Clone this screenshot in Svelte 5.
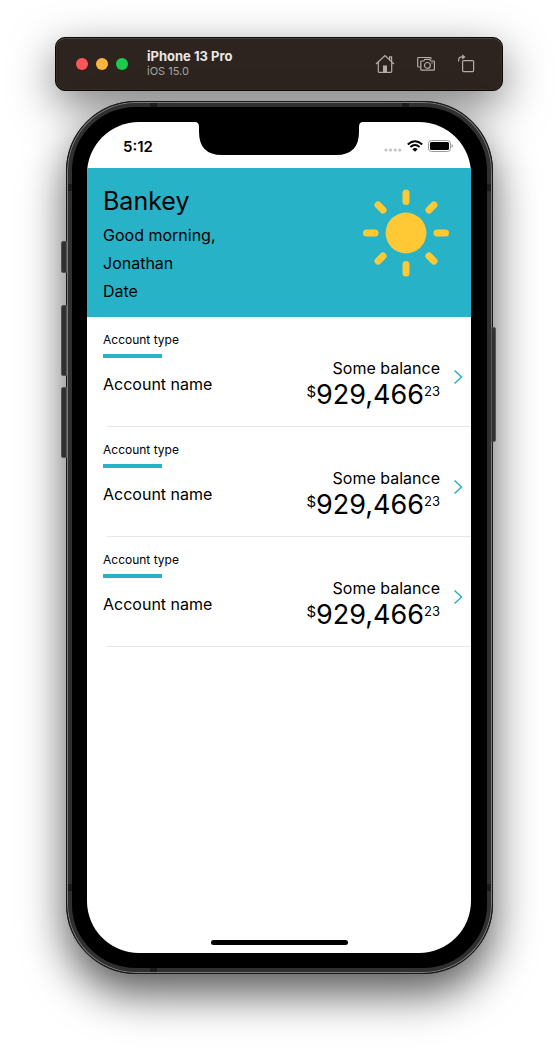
<script>
  const accounts = [1, 2, 3].map((id) => ({
    id,
    type: 'Account type',
    name: 'Account name',
    label: 'Some balance',
    dollars: '929,466',
    cents: '23'
  }));
  const diagonals = [45, 135, 225, 315];
  const bands = ['top-left', 'top-right', 'left-top', 'right-top', 'left-bottom', 'right-bottom', 'bottom-left'];
</script>

<main>
  <header class="toolbar">
    <div class="lights">
      <button class="red" aria-label="Close"></button>
      <button class="amber" aria-label="Minimize"></button>
      <button class="green" aria-label="Zoom"></button>
    </div>
    <div class="device">
      <strong>iPhone 13 Pro</strong>
      <span>iOS 15.0</span>
    </div>
    <div class="tools">
      <button aria-label="Home">
        <svg width="20" height="20" viewBox="0 0 20 20">
          <path d="M1 10 10 1.600l9 8.400M3.300 8.300v9.200q0 .8.8.8h11.800q.8 0 .8-.8V8.300M14.600 5.800V2.800h2v5" />
          <path class="solid" d="M8 11.500h4v7H8z" />
        </svg>
      </button>
      <button aria-label="Screenshot">
        <svg width="20" height="20" viewBox="0 0 20 20">
          <path d="M4.5 13h-2q-.8 0-.8-.8V4.300q0-.8.8-.8h11.700q.8 0 .8.8v1" />
          <path d="M5.600 7h2.100l1.200-1.700h4.700L14.800 7h2.800q.8 0 .8.8v7.600q0 .8-.8.8h-12q-.8 0-.8-.8V7.800q0-.8.8-.8z" />
          <circle cx="11.400" cy="11.400" r="2.900" />
          <circle class="solid" cx="16" cy="9" r=".7" />
        </svg>
      </button>
      <button aria-label="Rotate">
        <svg width="20" height="20" viewBox="0 0 20 20">
          <rect x="5.600" y="6.600" width="11" height="11" rx="1" />
          <path d="M1.600 7.500V6.500Q1.600 2.900 5 2.900h2" />
          <path class="solid" d="M5.200.2 8.500 2.900 5.200 5.500z" />
        </svg>
      </button>
    </div>
  </header>

  <section class="phone">
    {#each bands as band}
      <i class="band {band}"></i>
    {/each}
    <i class="key mute"></i>
    <i class="key up"></i>
    <i class="key down"></i>
    <i class="key power"></i>
    <div class="screen">
      <svg class="notch" width="168" height="33" viewBox="0 0 168 33">
        <path d="M0 0h168q-4 0-4 5v5q0 23-23 23H27Q4 33 4 10V5q0-5-4-5z" />
      </svg>
      <div class="status">
        <time>5:12</time>
        <div class="signals">
          <svg width="18" height="12" viewBox="0 0 18 12" fill="#c4c4c6">
            <circle cx="2" cy="10" r="1.6" /><circle cx="6.6" cy="10" r="1.6" />
            <circle cx="11.2" cy="10" r="1.6" /><circle cx="15.8" cy="10" r="1.6" />
          </svg>
          <svg width="16" height="12" viewBox="0 0 16 12">
            <path d="M.8 4.400q7.200-6.300 14.400 0M3.400 7q4.600-4 9.200 0" fill="none" stroke="#000" stroke-width="2" />
            <path d="M8 11.800 5.300 9.200q2.700-2.200 5.400 0z" />
          </svg>
          <svg width="25" height="12" viewBox="0 0 25 12">
            <rect x=".5" y=".5" width="22" height="11" rx="3" fill="none" stroke="#999" />
            <rect x="2" y="2" width="19" height="8" rx="1.5" />
            <path d="M23.600 4q1.400.5 1.400 2t-1.400 2z" fill="#999" />
          </svg>
        </div>
      </div>

      <div class="hero">
        <div>
          <h1>Bankey</h1>
          <p>Good morning,</p>
          <p>Jonathan</p>
          <p>Date</p>
        </div>
        <svg width="88" height="88" viewBox="-44 -44 88 88" fill="#ffc935">
          <circle r="20.400" />
          <path d="M0-40v8.500M0 40v-8.500M-39.500 0h8.500M39.500 0H31" />
          {#each diagonals as angle}
            <path d="M32.500 0h7" transform="rotate({angle})" />
          {/each}
        </svg>
      </div>

      <ul>
        {#each accounts as account (account.id)}
          <li>
            <a href="#account-{account.id}">
              <div class="info">
                <span class="type">{account.type}</span>
                <span class="name">{account.name}</span>
              </div>
              <div class="balance">
                <span class="label">{account.label}</span>
                <span class="amount"><small class="sign">$</small>{account.dollars}<small>{account.cents}</small></span>
              </div>
              <svg width="10" height="16" viewBox="0 0 10 16">
                <path d="m1.500 1.500 7 6.500-7 6.500" />
              </svg>
            </a>
          </li>
        {/each}
      </ul>
      <div class="home-bar"></div>
    </div>
  </section>
</main>

<style>
  :global(body) {
    margin: 0;
    background: #fff;
  }
  * {
    box-sizing: border-box;
  }
  main {
    padding: 37px 55px 75px;
    overflow: hidden;
    font-family: Inter, "Liberation Sans", sans-serif;
    color: #000;
  }
  button {
    padding: 0;
    border: 0;
    background: none;
  }
  svg {
    display: block;
  }
  .toolbar {
    display: flex;
    align-items: center;
    height: 54px;
    padding: 0 25px 0 20px;
    border: 1px solid #0b0807;
    border-radius: 10px;
    background: #2d2420;
    box-shadow: inset 0 1px 0 #4b433f, inset 0 0 0 1px #352c28, 0 14px 44px rgba(0, 0, 0, 0.5);
  }
  .lights {
    display: flex;
    gap: 8px;
  }
  .lights button {
    width: 12px;
    height: 12px;
    border-radius: 50%;
  }
  .red {
    background: #ff5558;
  }
  .amber {
    background: #ffb43e;
  }
  .green {
    background: #1bcb4b;
  }
  .device {
    display: flex;
    flex-direction: column;
    flex: 1;
    margin-left: 19px;
    font-size: 11px;
    line-height: 15px;
    color: #aaa4a1;
  }
  .device strong {
    font-size: 13px;
    font-weight: 700;
    color: #ebe7e5;
  }
  .tools {
    display: flex;
    gap: 21px;
  }
  .tools svg {
    fill: none;
    stroke: #b4aca8;
    stroke-width: 1.2;
  }
  .tools .solid {
    fill: #b4aca8;
    stroke: none;
  }
  .phone {
    position: relative;
    margin: 10px 10px 0 11px;
    padding: 15px 16px 15px 15px;
    border: 6px solid #303030;
    border-radius: 70px;
    background: #000;
    box-shadow: 0 20px 44px rgba(0, 0, 0, 0.65);
  }
  .phone::before {
    content: "";
    position: absolute;
    inset: -6px;
    border: 1px solid #171717;
    border-radius: 70px;
    box-shadow: inset 0 0 0 1px #7c7c7c;
  }
  .band {
    position: absolute;
    width: 4px;
    height: 7px;
    background: #1c1c1c;
  }
  .top-left,
  .top-right,
  .bottom-left {
    width: 7px;
    height: 4px;
  }
  .top-left,
  .top-right {
    top: -4px;
  }
  .top-left,
  .bottom-left {
    left: 78px;
  }
  .top-right {
    right: 78px;
  }
  .bottom-left {
    bottom: -4px;
  }
  .left-top,
  .left-bottom {
    left: -4px;
  }
  .right-top,
  .right-bottom {
    right: -4px;
  }
  .left-top,
  .right-top {
    top: 77px;
  }
  .left-bottom,
  .right-bottom {
    bottom: 77px;
  }
  .key {
    position: absolute;
    left: -11px;
    width: 6px;
    border: 1px solid #555;
    border-radius: 2px 0 0 2px;
    background: #303030;
  }
  .mute {
    top: 134px;
    height: 32px;
  }
  .up {
    top: 198px;
    height: 71px;
  }
  .down {
    top: 280px;
    height: 71px;
  }
  .power {
    top: 220px;
    right: -9px;
    left: auto;
    width: 5px;
    height: 115px;
    border-radius: 0 2px 2px 0;
  }
  .screen {
    position: relative;
    display: flex;
    flex-direction: column;
    aspect-ratio: 384 / 831;
    border-radius: 52px;
    background: #fff;
    overflow: hidden;
  }
  .notch {
    position: absolute;
    top: 0;
    left: 50%;
    transform: translateX(-50%);
  }
  .status {
    display: flex;
    justify-content: space-between;
    align-items: center;
    height: 46px;
    padding: 2px 18px 0 36px;
  }
  .status time {
    font-size: 15px;
    font-weight: 600;
  }
  .signals {
    display: flex;
    gap: 5px;
  }
  .hero {
    display: flex;
    justify-content: space-between;
    align-items: flex-start;
    height: 149px;
    padding: 17px 21px 0 16px;
    background: #28b2c7;
  }
  .hero svg {
    margin-top: 4px;
    stroke: #ffc935;
    stroke-width: 7;
    stroke-linecap: round;
  }
  .hero circle {
    stroke: none;
  }
  h1 {
    margin: 0 0 4px;
    font-size: 25px;
    font-weight: 400;
    line-height: 32px;
  }
  p {
    margin: 0;
    font-size: 16px;
    line-height: 28px;
  }
  ul {
    margin: 0;
    padding: 0;
    list-style: none;
  }
  li {
    position: relative;
  }
  li::after {
    content: "";
    position: absolute;
    right: 0;
    bottom: 0;
    left: 20px;
    height: 1px;
    background: #e8e8e9;
  }
  a {
    display: flex;
    align-items: flex-start;
    height: 110px;
    padding: 15px 8px 0 16px;
    color: inherit;
    text-decoration: none;
  }
  .info,
  .balance {
    display: flex;
    flex-direction: column;
  }
  .info {
    flex: 1;
    align-items: flex-start;
  }
  .type {
    font-size: 12px;
    line-height: 16px;
  }
  .type::after {
    content: "";
    display: block;
    width: 59px;
    height: 4px;
    margin-top: 6px;
    background: #28b2c7;
  }
  .name {
    margin-top: 16px;
    font-size: 16px;
    line-height: 20px;
  }
  .balance {
    align-items: flex-end;
    margin: 26px 13px 0 0;
  }
  .label {
    font-size: 16px;
    line-height: 20px;
  }
  .amount {
    display: flex;
    font-size: 27px;
    line-height: 34px;
  }
  .amount small {
    font-size: 13px;
    line-height: 27px;
  }
  .amount .sign {
    font-size: 15px;
  }
  a svg {
    margin-top: 37px;
    fill: none;
    stroke: #28b2c7;
    stroke-width: 1.5;
  }
  .home-bar {
    width: 137px;
    height: 5px;
    margin: auto auto 8px;
    border-radius: 3px;
    background: #000;
  }
</style>
